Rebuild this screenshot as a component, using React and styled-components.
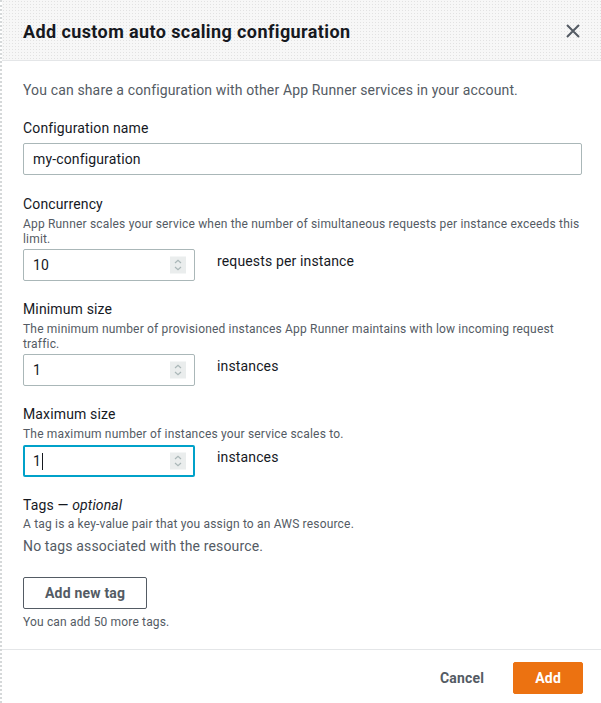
import styled, { createGlobalStyle } from 'styled-components';

const GlobalStyle = createGlobalStyle`
    html, body {
        margin: 0;
        padding: 0;
        background: #fff;
    }
    body {
        font-family: Roboto, "Liberation Sans", sans-serif;
        color: #16191f;
    }
`;

const Modal = styled.div`
    width: 601px;
    height: 703px;
    box-sizing: border-box;
    border-left: 2px dotted #d5d8d9;
    display: flex;
    flex-direction: column;
    background: #fff;
`;

const Header = styled.header`
    height: 61px;
    flex-shrink: 0;
    box-sizing: border-box;
    display: flex;
    align-items: center;
    justify-content: space-between;
    padding: 2px 18px 0 21px;
    border-bottom: 1px solid #e4e6e8;
    background-color: #f7f7f7;
    background-image: radial-gradient(#e2e2e2 0.6px, transparent 0.8px);
    background-size: 3px 3px;
`;

const Title = styled.h2`
    margin: 0;
    font-size: 18px;
    font-weight: 700;
    letter-spacing: 0.4px;
    color: #16191f;
`;

const CloseButton = styled.button`
    border: none;
    background: none;
    padding: 0;
    width: 20px;
    height: 20px;
    display: flex;
    align-items: center;
    justify-content: center;
    cursor: pointer;
`;

const Body = styled.div`
    flex: 1;
    padding: 21px 18px 0 21px;
    display: flex;
    flex-direction: column;
    letter-spacing: 0.14px;
`;

const Intro = styled.p`
    margin: 0 0 20px;
    font-size: 14px;
    color: #545b64;
`;

const Field = styled.div`
    display: flex;
    flex-direction: column;
    margin-bottom: ${p => p.$gap || 18}px;
`;

const Label = styled.label`
    font-size: 14px;
    line-height: 20px;
    color: #16191f;
    margin-bottom: ${p => (p.$tight ? 0 : 5)}px;

    em {
        font-style: italic;
    }
`;

const Hint = styled.div`
    font-size: 12px;
    line-height: 15px;
    letter-spacing: 0.18px;
    color: #545b64;
    margin: ${p => p.$before ?? 3}px 0 ${p => p.$after ?? 2}px;
`;

const Row = styled.div`
    display: flex;
    align-items: flex-start;
    gap: 22px;
`;

const TextInput = styled.input`
    box-sizing: border-box;
    width: 559px;
    height: 32px;
    padding: 0 9px;
    border: 1px solid #aab7b8;
    border-radius: 2px;
    font-family: inherit;
    font-size: 14px;
    letter-spacing: 0.14px;
    color: #16191f;
    outline: none;
`;

const NumberBox = styled.div`
    position: relative;
    box-sizing: border-box;
    width: 172px;
    height: 32px;
    display: flex;
    align-items: center;
    padding: 0 ${p => (p.$focused ? 8 : 9)}px;
    border: ${p => (p.$focused ? '2px solid #00a1c9' : '1px solid #aab7b8')};
    border-radius: 2px;
    font-size: 14px;
    color: #16191f;
`;

const Caret = styled.span`
    display: inline-block;
    width: 1px;
    height: 17px;
    background: #16191f;
    margin-left: 1px;
`;

const Spinner = styled.span`
    position: absolute;
    right: ${p => (p.$focused ? 7 : 8)}px;
    top: 50%;
    transform: translateY(-50%);
    width: 16px;
    height: 17px;
    background: #eaeded;
    display: flex;
    align-items: center;
    justify-content: center;
`;

const Unit = styled.span`
    font-size: 14px;
    line-height: 20px;
    color: #16191f;
    padding-top: 2px;
`;

const Empty = styled.div`
    font-size: 14px;
    color: #545b64;
    margin: 6px 0 23px;
`;

const SecondaryButton = styled.button`
    align-self: flex-start;
    box-sizing: border-box;
    height: 32px;
    padding: 0 21px;
    background: #fff;
    border: 1px solid #545b64;
    border-radius: 2px;
    font-family: inherit;
    font-size: 14px;
    font-weight: 700;
    letter-spacing: 0.2px;
    color: #545b64;
    cursor: pointer;
`;

const Note = styled.div`
    font-size: 12px;
    letter-spacing: 0.16px;
    color: #545b64;
    margin-top: 6px;
`;

const Footer = styled.footer`
    height: 54px;
    flex-shrink: 0;
    box-sizing: border-box;
    border-top: 1px solid #e4e6e8;
    display: flex;
    align-items: flex-start;
    justify-content: flex-end;
    gap: 12px;
    padding: 12px 18px 0 0;
`;

const FooterButton = styled.button`
    box-sizing: border-box;
    height: 32px;
    padding: 0 ${p => (p.$primary ? 21 : 16)}px;
    border: 1px solid ${p => (p.$primary ? '#ec7211' : 'transparent')};
    border-radius: 2px;
    background: ${p => (p.$primary ? '#ec7211' : 'transparent')};
    color: ${p => (p.$primary ? '#fff' : '#545b64')};
    font-family: inherit;
    font-size: 14px;
    font-weight: 700;
    letter-spacing: 0.2px;
    cursor: pointer;
`;

const Arrows = () => (
    <svg width="10" height="13" viewBox="0 0 10 13" fill="none" stroke="#aab7b8" strokeWidth="1.2">
        <path d="M2 4.5 L5 1.8 L8 4.5" />
        <path d="M2 8.5 L5 11.2 L8 8.5" />
    </svg>
);

const NumberInput = ({ value, focused }) => (
    <NumberBox $focused={focused}>
        {value}
        {focused && <Caret />}
        <Spinner $focused={focused}>
            <Arrows />
        </Spinner>
    </NumberBox>
);

const App = () => {
    return (
        <>
            <GlobalStyle />
            <Modal>
                <Header>
                    <Title>Add custom auto scaling configuration</Title>
                    <CloseButton aria-label="Close">
                        <svg width="16" height="16" viewBox="0 0 16 16" stroke="#545b64" strokeWidth="2" fill="none">
                            <path d="M2 2 L14 14 M14 2 L2 14" />
                        </svg>
                    </CloseButton>
                </Header>
                <Body>
                    <Intro>You can share a configuration with other App Runner services in your account.</Intro>

                    <Field $gap={19}>
                        <Label>Configuration name</Label>
                        <TextInput defaultValue="my-configuration" />
                    </Field>

                    <Field>
                        <Label $tight>Concurrency</Label>
                        <Hint>
                            App Runner scales your service when the number of simultaneous requests per instance
                            exceeds this limit.
                        </Hint>
                        <Row>
                            <NumberInput value="10" />
                            <Unit>requests per instance</Unit>
                        </Row>
                    </Field>

                    <Field>
                        <Label $tight>Minimum size</Label>
                        <Hint>
                            The minimum number of provisioned instances App Runner maintains with low incoming
                            request traffic.
                        </Hint>
                        <Row>
                            <NumberInput value="1" />
                            <Unit>instances</Unit>
                        </Row>
                    </Field>

                    <Field $gap={18}>
                        <Label $tight>Maximum size</Label>
                        <Hint $after={3}>The maximum number of instances your service scales to.</Hint>
                        <Row>
                            <NumberInput value="1" focused />
                            <Unit>instances</Unit>
                        </Row>
                    </Field>

                    <Label $tight>
                        Tags — <em>optional</em>
                    </Label>
                    <Hint $before={2} $after={0}>A tag is a key-value pair that you assign to an AWS resource.</Hint>
                    <Empty>No tags associated with the resource.</Empty>
                    <SecondaryButton>Add new tag</SecondaryButton>
                    <Note>You can add 50 more tags.</Note>
                </Body>
                <Footer>
                    <FooterButton>Cancel</FooterButton>
                    <FooterButton $primary>Add</FooterButton>
                </Footer>
            </Modal>
        </>
    );
};

export default App;
